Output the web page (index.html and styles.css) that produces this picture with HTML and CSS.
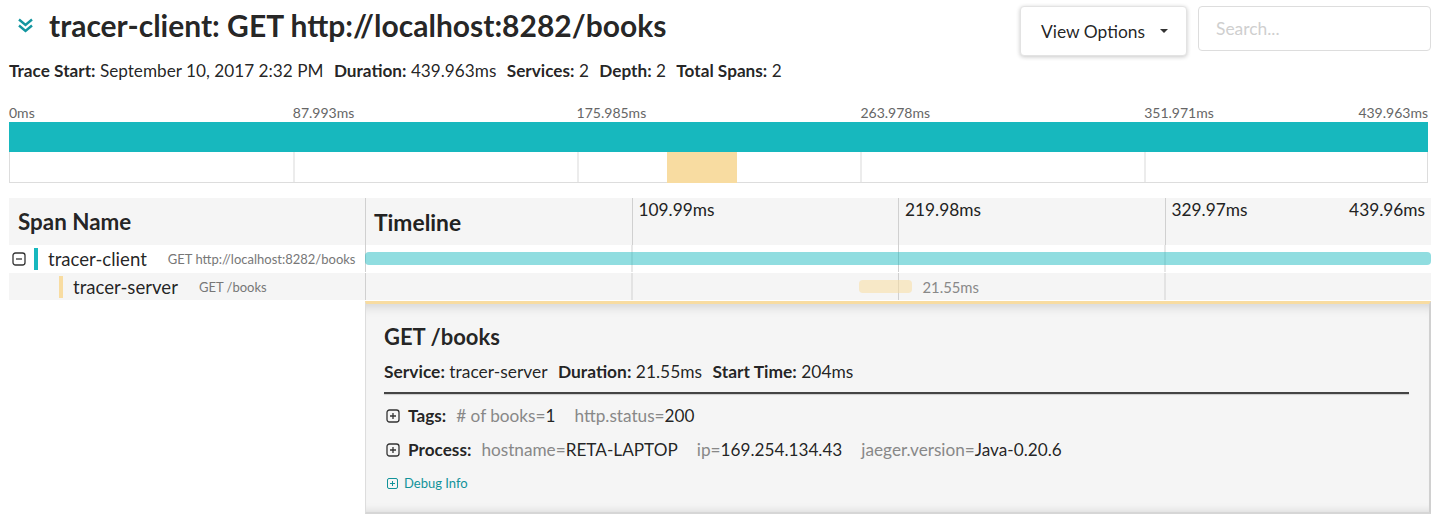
FILE: index.html
```html
<!DOCTYPE html>
<html lang="en">
<head>
<meta charset="utf-8">
<title>tracer-client: GET http://localhost:8282/books</title>
<link rel="stylesheet" href="styles.css">
</head>
<body>
<div class="page">
  <header class="trace-header">
    <div class="title-block">
      <h1 class="title">
        <svg class="chevron" viewBox="0 0 17 16" aria-hidden="true"><path d="M2 2.5 L8.5 8 L15 2.5 M2 8.5 L8.5 14 L15 8.5" fill="none" stroke="#1396a0" stroke-width="2.4"/></svg>
        <span>tracer-client: GET http://localhost:8282/books</span>
      </h1>
      <div class="meta">
        <span class="meta-item"><b>Trace Start:</b> September 10, 2017 2:32 PM</span>
        <span class="meta-item"><b>Duration:</b> 439.963ms</span>
        <span class="meta-item"><b>Services:</b> 2</span>
        <span class="meta-item"><b>Depth:</b> 2</span>
        <span class="meta-item"><b>Total Spans:</b> 2</span>
      </div>
    </div>
    <div class="actions">
      <button class="view-options" type="button">View Options <span class="caret"></span></button>
      <input class="search" type="text" placeholder="Search...">
    </div>
  </header>

  <section class="minimap">
    <div class="mm-labels">
      <span>0ms</span>
      <span>87.993ms</span>
      <span>175.985ms</span>
      <span>263.978ms</span>
      <span class="last"><span>351.971ms</span><span>439.963ms</span></span>
    </div>
    <div class="mm-canvas">
      <div class="mm-grid"><div></div><div></div><div></div><div></div><div></div></div>
      <div class="mm-span client"></div>
      <div class="mm-span server" style="margin-left:46.37%;width:4.9%"></div>
    </div>
  </section>

  <section class="span-table">
    <div class="row head">
      <div class="cell name-head">Span Name</div>
      <div class="cell tl-head">
        <div class="tl-col"><span class="tl-title">Timeline</span></div>
        <div class="tl-col"><span>109.99ms</span></div>
        <div class="tl-col"><span>219.98ms</span></div>
        <div class="tl-col last"><span>329.97ms</span><span>439.96ms</span></div>
      </div>
    </div>

    <div class="row span-row odd">
      <div class="cell name-cell">
        <svg class="toggle" viewBox="0 0 14 14" aria-hidden="true"><rect x="1" y="1" width="12" height="12" rx="2.5" fill="none" stroke="#333" stroke-width="1.3"/><path d="M4 7 H10" stroke="#333" stroke-width="1.3"/></svg>
        <span class="svc-bar teal"></span>
        <span class="svc">tracer-client</span>
        <span class="op">GET http://localhost:8282/books</span>
      </div>
      <div class="cell tl-cell">
        <div class="bar client-bar" style="margin-left:0;width:100%"></div>
      </div>
    </div>

    <div class="row span-row even">
      <div class="cell name-cell depth-1">
        <span class="svc-bar orange"></span>
        <span class="svc">tracer-server</span>
        <span class="op">GET /books</span>
      </div>
      <div class="cell tl-cell">
        <div class="bar server-bar" style="margin-left:46.37%;width:4.9%"></div>
        <span class="bar-label">21.55ms</span>
      </div>
    </div>

    <div class="row detail-row">
      <div class="cell"></div>
      <div class="detail">
        <h2 class="detail-title">GET /books</h2>
        <div class="detail-meta">
          <span class="meta-item"><b>Service:</b> tracer-server</span>
          <span class="meta-item"><b>Duration:</b> 21.55ms</span>
          <span class="meta-item"><b>Start Time:</b> 204ms</span>
        </div>
        <hr class="divider">
        <div class="kv-line">
          <svg class="plus" viewBox="0 0 14 14" aria-hidden="true"><rect x="1" y="1" width="12" height="12" rx="2.5" fill="none" stroke="#333" stroke-width="1.3"/><path d="M4 7 H10 M7 4 V10" stroke="#333" stroke-width="1.3"/></svg>
          <b class="kv-label">Tags:</b>
          <span class="kv"><span class="k"># of books=</span>1</span>
          <span class="kv"><span class="k">http.status=</span>200</span>
        </div>
        <div class="kv-line">
          <svg class="plus" viewBox="0 0 14 14" aria-hidden="true"><rect x="1" y="1" width="12" height="12" rx="2.5" fill="none" stroke="#333" stroke-width="1.3"/><path d="M4 7 H10 M7 4 V10" stroke="#333" stroke-width="1.3"/></svg>
          <b class="kv-label">Process:</b>
          <span class="kv"><span class="k">hostname=</span>RETA-LAPTOP</span>
          <span class="kv"><span class="k">ip=</span>169.254.134.43</span>
          <span class="kv"><span class="k">jaeger.version=</span>Java-0.20.6</span>
        </div>
        <div class="debug">
          <svg class="plus-small" viewBox="0 0 11 11" aria-hidden="true"><rect x="0.5" y="0.5" width="10" height="10" rx="1.5" fill="none" stroke="#11939a" stroke-width="1"/><path d="M3 5.5 H8 M5.5 3 V8" stroke="#11939a" stroke-width="1"/></svg>
          <span>Debug Info</span>
        </div>
      </div>
    </div>
  </section>
</div>
</body>
</html>
```
FILE: styles.css
```css
* { box-sizing: border-box; }

body {
  margin: 0;
  font-family: Lato, "Noto Sans", sans-serif;
  color: rgba(0, 0, 0, 0.87);
  background: #fff;
}

.page {
  padding: 0 6px 0 9px;
}

/* ---------- header ---------- */
.trace-header {
  display: flex;
  justify-content: space-between;
  align-items: flex-start;
  padding-top: 6px;
}

.title {
  margin: 0;
  height: 38px;
  display: flex;
  align-items: center;
  gap: 15px;
  padding-left: 8px;
  font-size: 30px;
  font-weight: 700;
  line-height: 1;
}

.chevron {
  width: 17px;
  height: 16px;
  flex: none;
}

.meta {
  margin-top: 17px;
  font-size: 17.2px;
  line-height: 20px;
  white-space: nowrap;
}

.meta-item {
  margin-right: 6px;
}

.meta-item b {
  font-weight: 700;
}

.actions {
  display: flex;
  gap: 11px;
  align-items: flex-start;
}

.view-options {
  width: 167px;
  height: 50px;
  padding: 0 0 0 20px;
  display: flex;
  align-items: center;
  gap: 15px;
  background: #fff;
  border: 1px solid #e3e3e3;
  border-radius: 4px;
  box-shadow: 0 1px 4px rgba(0, 0, 0, 0.22);
  font-family: Lato, "Noto Sans", sans-serif;
  font-size: 17.4px;
  color: rgba(0, 0, 0, 0.87);
  white-space: nowrap;
}

.caret {
  width: 0;
  height: 0;
  border-left: 4px solid transparent;
  border-right: 4px solid transparent;
  border-top: 4px solid #333;
}

.search {
  width: 233px;
  height: 45px;
  padding: 0 17px;
  border: 1px solid #ddd;
  border-radius: 4px;
  font-family: Lato, "Noto Sans", sans-serif;
  font-size: 17.4px;
  outline: none;
}

.search::placeholder {
  color: #cfcfcf;
}

/* ---------- minimap ---------- */
.minimap {
  margin-top: 24px;
  margin-right: 3px;
}

.mm-labels {
  display: grid;
  grid-template-columns: repeat(5, 1fr);
  font-size: 14px;
  line-height: 16px;
  color: #666;
}

.mm-labels .last {
  display: flex;
  justify-content: space-between;
}

.mm-canvas {
  position: relative;
  margin-top: 1px;
}

.mm-grid {
  position: absolute;
  top: 30px;
  left: 0;
  right: 0;
  bottom: 0;
  display: grid;
  grid-template-columns: repeat(5, 1fr);
  border: 1px solid #ddd;
  border-top: 0;
}

.mm-grid div + div {
  border-left: 2px solid #ececec;
}

.mm-span {
  position: relative;
}

.mm-span.client {
  height: 30px;
  background: #17b8be;
}

.mm-span.server {
  height: 31px;
  background: #f8dca1;
}

/* ---------- span table ---------- */
.span-table {
  margin-top: 15px;
}

.row {
  display: grid;
  grid-template-columns: 356px 1fr;
}

.head {
  height: 47px;
  background: #f5f5f5;
}

.name-head {
  display: flex;
  align-items: center;
  padding-left: 9px;
  font-size: 22.4px;
  font-weight: 700;
}

.tl-head {
  display: grid;
  grid-template-columns: repeat(4, 1fr);
}

.tl-col {
  border-left: 1px solid #d0d0d0;
  padding: 2px 6px 0 6px;
  font-size: 17.3px;
  line-height: 20px;
  color: #222;
}

.tl-col.last {
  display: flex;
  justify-content: space-between;
}

.tl-title {
  display: block;
  padding-left: 2px;
  margin-top: 10px;
  font-size: 22.8px;
  font-weight: 700;
  line-height: 24px;
}

.span-row {
  height: 28px;
  border-bottom: 1px solid #fff;
}

.span-row.even .name-cell,
.span-row.even .tl-cell {
  background-color: #f5f5f5;
}

.name-cell {
  display: flex;
  align-items: center;
  padding-left: 3px;
  white-space: nowrap;
  overflow: hidden;
}

.name-cell.depth-1 {
  padding-left: 50px;
}

.toggle {
  width: 14px;
  height: 14px;
  margin-right: 8px;
  flex: none;
}

.svc-bar {
  width: 4px;
  height: 22px;
  margin-right: 10px;
  flex: none;
}

.svc-bar.teal { background: #17b8be; }
.svc-bar.orange { background: #f8dca1; }

.svc {
  font-size: 18.6px;
  margin-right: 21px;
}

.op {
  font-size: 13px;
  color: #777;
}

.tl-cell {
  display: flex;
  align-items: center;
  background-image: linear-gradient(to right, #d0d0d0 1px, transparent 1px);
  background-size: 25% 100%;
}

.bar {
  height: 13px;
  border-radius: 4px;
  flex: none;
}

.client-bar {
  background: rgba(23, 184, 190, 0.48);
}

.server-bar {
  background: rgba(248, 220, 161, 0.55);
}

.bar-label {
  margin-left: 11px;
  font-size: 14.8px;
  color: #888;
}

/* ---------- detail panel ---------- */
.detail {
  height: 213px;
  padding: 21px 20px 0 18px;
  background: #f5f5f5;
  border-top: 3px solid #f8dca1;
  border-left: 1px solid #ddd;
  border-right: 2px solid #d0d0d0;
  border-bottom: 2px solid #d6d6d6;
  box-shadow: inset 0 12px 12px -10px rgba(0, 0, 0, 0.16),
              inset 0 -10px 10px -10px rgba(0, 0, 0, 0.14);
}

.detail-title {
  margin: 0;
  font-size: 22px;
  line-height: 24px;
  font-weight: 700;
}

.detail-meta {
  margin-top: 13px;
  font-size: 17.4px;
  line-height: 20px;
}

.divider {
  margin: 10px 0 0;
  height: 2px;
  border: 0;
  background: #444;
  box-shadow: 0 1px 1px #ccc;
}

.kv-line {
  display: flex;
  align-items: center;
  margin-top: 12px;
  font-size: 17.2px;
  line-height: 20px;
  white-space: nowrap;
}

.kv-line + .kv-line {
  margin-top: 14px;
}

.plus {
  width: 14px;
  height: 14px;
  margin-left: 2px;
  margin-right: 8px;
  flex: none;
}

.kv-label {
  margin-right: 10px;
}

.kv {
  margin-right: 19px;
}

.k {
  color: #888;
}

.debug {
  display: flex;
  align-items: center;
  margin-top: 15px;
  font-size: 13px;
  line-height: 16px;
  color: #11939a;
}

.plus-small {
  width: 11px;
  height: 11px;
  margin-left: 3px;
  margin-right: 6px;
}
```
